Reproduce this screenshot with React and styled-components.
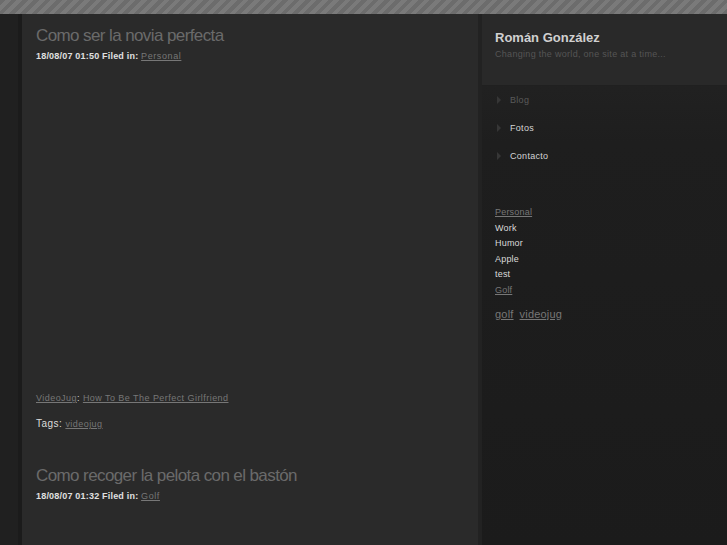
import styled, { createGlobalStyle } from "styled-components";

const Global = createGlobalStyle`
  html, body { margin: 0; padding: 0; background: #1f1f1f; }
  body { font-family: "Liberation Sans", Arial, sans-serif; }
`

const Stripes = styled.div`
  height: 14px;
  background: repeating-linear-gradient(
    -45deg,
    #6c6c6c 0px,
    #6c6c6c 4px,
    #7a7a7a 4px,
    #7a7a7a 8px
  );
`

const Layout = styled.div`
  display: grid;
  grid-template-columns: 18px 460px 1fr;
  min-height: 531px;
`

const Gutter = styled.div`
  background: #202020;
`

const Main = styled.main`
  background: #2a2a2a;
  border-left: 4px solid #1b1b1b;
  padding: 11px 14px 0 14px;
`

const Post = styled.article`
  margin-bottom: 34px;
`

const Title = styled.h2`
  margin: 0 0 3px;
  font-size: 17px;
  font-weight: normal;
  color: #6a6a6a;
  letter-spacing: -0.6px;
  line-height: 22px;
`

const Meta = styled.div`
  font-size: 9px;
  font-weight: bold;
  color: #e0e0e0;
  letter-spacing: 0.2px;
  line-height: 13px;
`

const Link = styled.a`
  color: ${(p) => p.$color || "#777"};
  text-decoration: underline;
  font-weight: normal;
  letter-spacing: ${(p) => p.$spacing || "inherit"};
  font-size: ${(p) => p.$size || "inherit"};
`

const Video = styled.div`
  height: 329px;
`

const Para = styled.p`
  margin: 0 0 ${(p) => p.$gap || 12}px;
  font-size: ${(p) => p.$size || 9}px;
  color: #dcdcdc;
  letter-spacing: 0.45px;
  line-height: 13px;
`

const Sidebar = styled.aside`
  border-left: 4px solid #222;
  background: linear-gradient(#252525 0px, #1e1e1e 130px, #1b1b1b 100%);
`

const Brand = styled.div`
  background: #292929;
  padding: 15px 13px 0;
  height: 56px;
  border-bottom: 1px solid #202020;
`

const Name = styled.div`
  font-size: 13px;
  font-weight: bold;
  color: #d0d0d0;
  line-height: 17px;
`

const Tagline = styled.div`
  font-size: 9px;
  color: #555;
  letter-spacing: 0.3px;
  line-height: 12px;
  margin-top: 2px;
`

const Nav = styled.ul`
  list-style: none;
  margin: 0;
  padding: 7px 0 0 13px;
  display: flex;
  flex-direction: column;
  gap: 15px;
`

const NavItem = styled.li`
  display: flex;
  align-items: center;
  gap: 9px;
  height: 13px;
  font-size: 9px;
  letter-spacing: 0.3px;
  color: ${(p) => (p.$active ? "#5a5a5a" : "#d4d4d4")};
`

const Arrow = styled.span`
  width: 0;
  height: 0;
  margin-left: 2px;
  border-top: 4px solid transparent;
  border-bottom: 4px solid transparent;
  border-left: 4px solid #363636;
`

const Cats = styled.ul`
  list-style: none;
  margin: 0;
  padding: 44px 0 0 13px;
  display: flex;
  flex-direction: column;
  gap: 2.5px;
`

const Cat = styled.li`
  font-size: 9px;
  letter-spacing: 0.2px;
  line-height: 13px;
  color: #dadada;
`

const Cloud = styled.div`
  display: flex;
  gap: 6px;
  padding: 11px 0 0 13px;
  font-size: 11px;
  letter-spacing: 0.2px;
`

export default function App() {
  return (
    <>
      <Global />
      <Stripes />
      <Layout>
        <Gutter />
        <Main>
          <Post>
            <Title>Como ser la novia perfecta</Title>
            <Meta>
              18/08/07 01:50 Filed in: <Link $spacing="0.6px">Personal</Link>
            </Meta>
            <Video />
            <Para>
              <Link>VideoJug</Link>: <Link>How To Be The Perfect Girlfriend</Link>
            </Para>
            <Para $size={10}>
              Tags: <Link $size="9px">videojug</Link>
            </Para>
          </Post>
          <Post>
            <Title>Como recoger la pelota con el bastón</Title>
            <Meta>
              18/08/07 01:32 Filed in: <Link $spacing="0.6px">Golf</Link>
            </Meta>
          </Post>
        </Main>
        <Sidebar>
          <Brand>
            <Name>Román González</Name>
            <Tagline>Changing the world, one site at a time...</Tagline>
          </Brand>
          <Nav>
            <NavItem $active><Arrow />Blog</NavItem>
            <NavItem><Arrow />Fotos</NavItem>
            <NavItem><Arrow />Contacto</NavItem>
          </Nav>
          <Cats>
            <Cat><Link>Personal</Link></Cat>
            <Cat>Work</Cat>
            <Cat>Humor</Cat>
            <Cat>Apple</Cat>
            <Cat>test</Cat>
            <Cat><Link>Golf</Link></Cat>
          </Cats>
          <Cloud>
            <Link>golf</Link>
            <Link>videojug</Link>
          </Cloud>
        </Sidebar>
      </Layout>
    </>
  );
}
